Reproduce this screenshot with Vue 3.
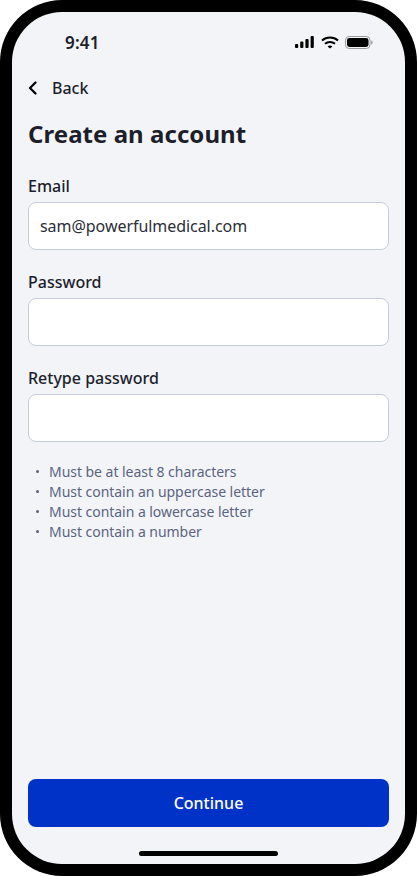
<script setup>
const fields = [
  { label: 'Email', value: 'sam@powerfulmedical.com' },
  { label: 'Password', value: '' },
  { label: 'Retype password', value: '' },
]
const rules = [
  'Must be at least 8 characters',
  'Must contain an uppercase letter',
  'Must contain a lowercase letter',
  'Must contain a number',
]
</script>

<template>
  <div class="phone">
    <div class="screen">
      <div class="status">
        <span class="time">9:41</span>
        <div class="status-icons">
          <svg class="signal" width="19" height="12" viewBox="0 0 19 12" fill="#000">
            <rect x="0" y="8" width="3.2" height="4" rx="1" />
            <rect x="5.2" y="5.5" width="3.2" height="6.5" rx="1" />
            <rect x="10.4" y="3" width="3.2" height="9" rx="1" />
            <rect x="15.6" y="0" width="3.2" height="12" rx="1" />
          </svg>
          <svg width="18" height="13" viewBox="0 0 18 13" fill="none" stroke="#000" stroke-width="2">
            <path d="M1 4.6C5.5 .6 12.5 .6 17 4.6" />
            <path d="M4 7.8C6.8 5.3 11.2 5.3 14 7.8" />
            <path d="M9 12.6 6.6 10.4C8 9.3 10 9.3 11.4 10.4Z" fill="#000" stroke="none" />
          </svg>
          <svg class="battery" width="28" height="13" viewBox="0 0 28 13">
            <rect x=".5" y=".5" width="24.5" height="12" rx="3.6" fill="none" stroke="#9a9a9e" />
            <rect x="2" y="2" width="21.5" height="9" rx="2.4" fill="#000" />
            <path d="M26.2 4.5c.9.3 1.4 1.1 1.4 2s-.5 1.7-1.4 2Z" fill="#9a9a9e" />
          </svg>
        </div>
      </div>

      <div class="back">
        <svg width="10" height="14" viewBox="0 0 10 14" fill="none" stroke="#000" stroke-width="2.2" stroke-linecap="round" stroke-linejoin="round">
          <path d="M7.5 1.5 2 7l5.5 5.5" />
        </svg>
        <span>Back</span>
      </div>

      <h1 class="title">Create an account</h1>

      <div class="fields">
        <div v-for="f in fields" :key="f.label" class="field">
          <label class="label">{{ f.label }}</label>
          <div class="input">{{ f.value }}</div>
        </div>
      </div>

      <ul class="rules">
        <li v-for="r in rules" :key="r" class="rule">
          <span class="dot"></span>
          <span>{{ r }}</span>
        </li>
      </ul>

      <button class="continue" type="button">Continue</button>
      <div class="home-wrap"><div class="home"></div></div>
    </div>
  </div>
</template>

<style>
html, body { margin: 0; background: #fff; }
</style>

<style scoped>
.phone {
  width: 417px;
  height: 876px;
  box-sizing: border-box;
  padding: 12px;
  background: #000;
  border-radius: 62px;
  font-family: "Noto Sans", sans-serif;
}
.screen {
  height: 852px;
  box-sizing: border-box;
  display: flex;
  flex-direction: column;
  padding: 0 16px;
  background: #f3f4f8;
  border-radius: 50px;
  overflow: hidden;
}
.status {
  height: 60px;
  flex: none;
  display: flex;
  align-items: center;
  justify-content: space-between;
  padding: 0 16px 0 37px;
}
.time {
  font-size: 17px;
  font-weight: 600;
  color: #1c1f2b;
  letter-spacing: .2px;
}
.status-icons { display: flex; align-items: center; gap: 6px; }
.signal { margin-right: 1px; }
.back {
  display: flex;
  align-items: center;
  gap: 14px;
  height: 32px;
  font-size: 16px;
  font-weight: 500;
  color: #1c1f2b;
}
.title {
  margin: 14px 0 0;
  font-size: 24px;
  line-height: 32px;
  font-weight: 700;
  letter-spacing: .05px;
  color: #1c1f2b;
}
.fields {
  display: flex;
  flex-direction: column;
  gap: 20px;
  margin-top: 24px;
}
.field { display: flex; flex-direction: column; gap: 4px; }
.label {
  font-size: 16px;
  line-height: 24px;
  font-weight: 500;
  color: #1c1f2b;
}
.input {
  height: 48px;
  box-sizing: border-box;
  padding: 0 11px;
  display: flex;
  align-items: center;
  background: #fff;
  border: 1px solid #c5cce0;
  border-radius: 8px;
  font-size: 16px;
  letter-spacing: -0.05px;
  color: #2b2e38;
}
.rules {
  list-style: none;
  margin: 19px 0 0;
  padding: 0 0 0 8px;
}
.rule {
  display: flex;
  align-items: center;
  height: 20px;
  font-size: 14px;
  letter-spacing: -0.04px;
  color: #5a6480;
}
.dot {
  width: 3px;
  height: 3px;
  margin-right: 10px;
  border-radius: 50%;
  background: #5a6480;
}
.continue {
  margin-top: auto;
  height: 48px;
  flex: none;
  border: 0;
  border-radius: 8px;
  background: #0132c8;
  color: #fff;
  font-family: inherit;
  font-size: 16px;
  font-weight: 500;
}
.home-wrap {
  height: 37px;
  flex: none;
  display: flex;
  justify-content: center;
  align-items: flex-start;
  padding-top: 24px;
  box-sizing: border-box;
}
.home {
  width: 139px;
  height: 5px;
  border-radius: 3px;
  background: #000;
}
</style>
